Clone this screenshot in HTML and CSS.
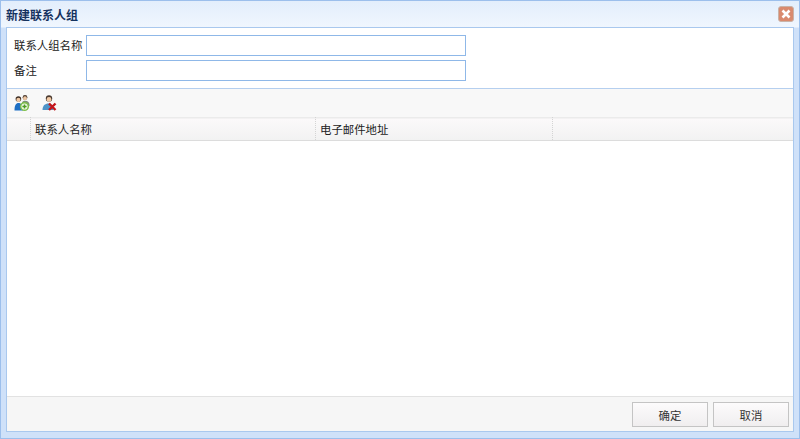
FILE: index.html
```html
<!DOCTYPE html>
<html lang="zh-CN">
<head>
    <meta charset="UTF-8">
    <meta name="viewport" content="width=device-width, initial-scale=1.0">
    <title>新建联系人组</title>
    <link rel="stylesheet" href="styles.css">
</head>
<body>

<div class="dialog">
    <div class="dialog-title">
        <span class="title-text">新建联系人组</span>
        <button class="close-button" aria-label="关闭">
            <svg width="10" height="10" viewBox="0 0 10 10">
                <path d="M1.5 1.5 L8.5 8.5 M8.5 1.5 L1.5 8.5" stroke="#fff" stroke-width="2.6" fill="none"/>
            </svg>
        </button>
    </div>

    <div class="dialog-body">
        <!-- Form -->
        <div class="group-form">
            <div class="form-row">
                <label class="form-label">联系人组名称</label>
                <input class="form-input" type="text">
            </div>
            <div class="form-row">
                <label class="form-label">备注</label>
                <input class="form-input" type="text">
            </div>
        </div>

        <!-- Toolbar -->
        <div class="toolbar">
            <button class="tool-button" aria-label="添加">
                <svg width="17" height="17" viewBox="0 0 17 17">
                    <circle cx="11" cy="2.4" r="2.4" fill="#4a3a30"/>
                    <circle cx="11" cy="3.2" r="1.9" fill="#eec6a2"/>
                    <path d="M7.5 11 C7.5 7 9 5.8 11 5.8 C13.5 5.8 15.5 7 15.5 10 L15.5 11 Z" fill="#7d8f78"/>
                    <circle cx="4.4" cy="4" r="2.8" fill="#3f2f26"/>
                    <circle cx="4.4" cy="4.9" r="2.1" fill="#f2c9a4"/>
                    <path d="M0.5 15.5 C0.5 10 2 8 4.5 8 C7 8 9 10 9 15.5 Z" fill="#1f6fc4"/>
                    <circle cx="10.5" cy="11.5" r="4.6" fill="#7fc04a"/>
                    <circle cx="10.5" cy="11.5" r="3.1" fill="#f2fae8"/>
                    <path d="M10.5 9.4 V13.6 M8.4 11.5 H12.6" stroke="#4f9a25" stroke-width="1.5"/>
                </svg>
            </button>
            <button class="tool-button" aria-label="删除">
                <svg width="17" height="17" viewBox="0 0 17 17">
                    <circle cx="8" cy="3.4" r="3.2" fill="#4a3a30"/>
                    <circle cx="8" cy="4.4" r="2.4" fill="#f2c9a4"/>
                    <path d="M1.5 15 C1.5 10.5 4 8.4 7.5 8.4 C10 8.4 12 9.5 12.5 15 Z" fill="#4d94c8"/>
                    <path d="M8 8.5 L14.5 15 M14.5 8.5 L8 15" stroke="#c4161c" stroke-width="2.4"/>
                </svg>
            </button>
        </div>

        <!-- Grid -->
        <div class="grid-header">
            <div class="grid-cell cell-check"></div>
            <div class="grid-cell cell-name">联系人名称</div>
            <div class="grid-cell cell-email">电子邮件地址</div>
            <div class="grid-cell cell-rest"></div>
        </div>
        <div class="grid-body"></div>

        <!-- Footer -->
        <div class="dialog-footer">
            <button class="footer-button">确定</button>
            <button class="footer-button">取消</button>
        </div>
    </div>
</div>

</body>
</html>
```

FILE: styles.css
```css
* {
    margin: 0;
    padding: 0;
    box-sizing: border-box;
}

html, body {
    height: 100%;
}

body {
    font-family: 'Liberation Sans', 'Noto Sans CJK SC', sans-serif;
    font-size: 11.4px;
    color: #222;
    background-color: #fff;
    overflow: hidden;
}

.dialog {
    display: flex;
    flex-direction: column;
    width: 800px;
    height: 439px;
    padding: 0 5px 6px;
    background: linear-gradient(to bottom, #e3eefc 0, #f0f6fe 26px, #cfe1f9 27px);
    border: 1px solid #9cbfec;
}

.dialog-title {
    display: flex;
    justify-content: space-between;
    align-items: center;
    height: 26px;
    flex-shrink: 0;
}

.title-text {
    font-size: 12px;
    font-weight: bold;
    color: #15325f;
}

.close-button {
    display: flex;
    justify-content: center;
    align-items: center;
    width: 16px;
    height: 16px;
    background-color: #d98a6e;
    border: 1px solid #c9b3a8;
    border-radius: 3px;
}

.dialog-body {
    display: flex;
    flex-direction: column;
    flex: 1;
    background-color: #fff;
    border: 1px solid #a9c8ee;
}

.group-form {
    display: flex;
    flex-direction: column;
    gap: 4px;
    height: 61px;
    padding: 7px 0 0 7px;
    border-bottom: 1px solid #b5cfef;
    flex-shrink: 0;
}

.form-row {
    display: flex;
    align-items: center;
    height: 21px;
}

.form-label {
    width: 72px;
    padding-bottom: 2px;
}

.form-input {
    width: 380px;
    height: 21px;
    background-color: #fff;
    border: 1px solid #8fb8e8;
}

.toolbar {
    display: flex;
    align-items: center;
    gap: 10px;
    height: 28px;
    padding-left: 7px;
    background-color: #f8f8f8;
    flex-shrink: 0;
}

.tool-button {
    display: flex;
    width: 17px;
    height: 17px;
    background: none;
    border: none;
}

.grid-header {
    display: flex;
    height: 24px;
    background: linear-gradient(to bottom, #ebebeb 0, #ebebeb 1px, #fbf9fa 2px, #f2f2f2 100%);
    border-bottom: 1px solid #dcdcdc;
    flex-shrink: 0;
}

.grid-cell {
    display: flex;
    align-items: center;
    padding-left: 4px;
    border-right: 1px dotted #d4d4d4;
}

.cell-check {
    width: 24px;
}

.cell-name {
    width: 285px;
}

.cell-email {
    width: 237px;
}

.cell-rest {
    flex: 1;
    border-right: none;
}

.grid-body {
    flex: 1;
    background-color: #fff;
}

.dialog-footer {
    display: flex;
    justify-content: flex-end;
    align-items: flex-start;
    gap: 5px;
    height: 35px;
    padding: 5px 4px 0 0;
    background-color: #f6f6f6;
    border-top: 1px solid #e2e2e2;
    flex-shrink: 0;
}

.footer-button {
    width: 76px;
    height: 25px;
    font-family: inherit;
    font-size: 11.4px;
    color: #333;
    background: linear-gradient(to bottom, #fcfbfc, #f0eeef);
    border: 1px solid #c4c4c4;
}
```
